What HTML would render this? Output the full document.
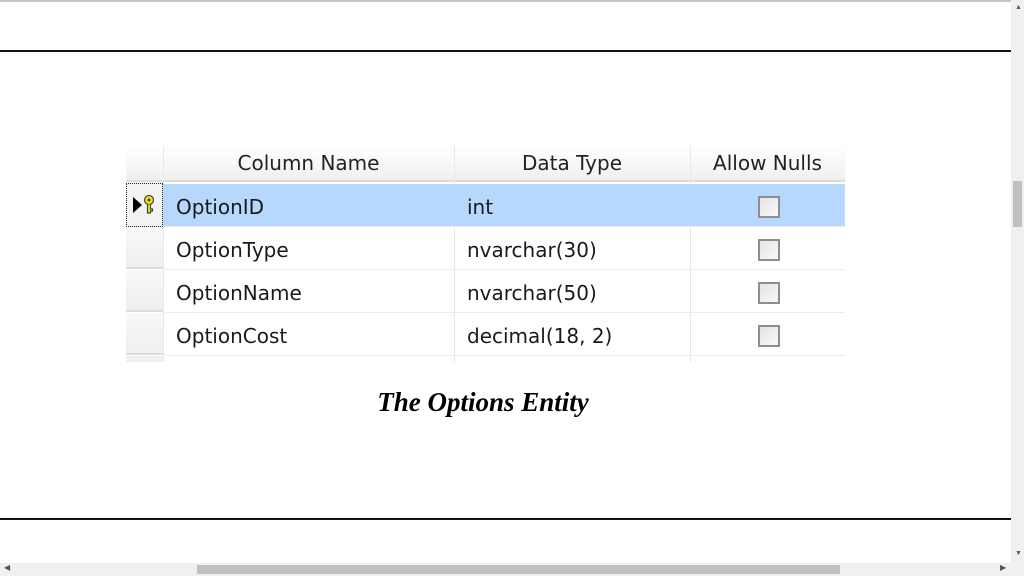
<!DOCTYPE html>
<html><head><style>
body{margin:0;width:1024px;height:576px;background:#fff;position:relative;overflow:hidden;font-family:"Liberation Sans",sans-serif}
.a{position:absolute}
.t{font-family:"DejaVu Sans","Liberation Sans",sans-serif;font-size:20px;color:#1a1a1a;line-height:43px;margin-top:2px}
.h{font-family:"DejaVu Sans","Liberation Sans",sans-serif;font-size:20px;color:#222;text-align:center;line-height:34px}
.cb{position:absolute;width:18px;height:18px;border:2px solid #8e8e8e;background:linear-gradient(135deg,#e4e4e4,#f8f8f8);left:758px}
.rs{position:absolute;left:126px;width:37px;height:40px;background:linear-gradient(#f8f8f8,#efefef);border-bottom:2px solid #ddd}
.rl{position:absolute;left:163px;width:682px;height:1px;background:#ececec}
</style></head><body>
<div class="a" style="left:0;top:0;width:1011px;height:2px;background:#c8c8c8"></div>
<div class="a" style="left:0;top:50px;width:1011px;height:2px;background:#111"></div>
<div class="a" style="left:0;top:518px;width:1011px;height:2px;background:#111"></div>
<div class="a" style="left:1011px;top:0;width:13px;height:576px;background:#f0f0f0"></div>
<div class="a" style="left:1013px;top:181px;width:9px;height:46px;background:#c0c0c0"></div>
<div class="a" style="left:1015px;top:4px;font-size:7px;color:#555">▲</div>
<div class="a" style="left:1015px;top:550px;font-size:7px;color:#555">▼</div>
<div class="a" style="left:0;top:563px;width:1011px;height:13px;background:#f0f0f0"></div>
<div class="a" style="left:197px;top:565px;width:643px;height:9px;background:#c0c0c0"></div>
<div class="a" style="left:4px;top:563px;font-size:8px;color:#555">◀</div>
<div class="a" style="left:1000px;top:563px;font-size:8px;color:#555">▶</div>
<div class="a" style="left:126px;top:146px;width:719px;height:34px;background:linear-gradient(#fff,#f0f0f0);border-bottom:2px solid #dcdcdc"></div>
<div class="a" style="left:163px;top:146px;width:1px;height:216px;background:#e8e8e8"></div>
<div class="a" style="left:454px;top:146px;width:1px;height:216px;background:#e8e8e8"></div>
<div class="a" style="left:690px;top:146px;width:1px;height:216px;background:#e8e8e8"></div>
<div class="a h" style="left:163px;top:146px;width:291px">Column Name</div>
<div class="a h" style="left:454px;top:146px;width:236px">Data Type</div>
<div class="a h" style="left:690px;top:146px;width:155px">Allow Nulls</div>
<div class="a" style="left:163px;top:184px;width:682px;height:42px;background:#b5d8fc"></div>
<div class="a" style="left:126px;top:183px;width:35px;height:42px;border:1px dotted #222;background:#f2f2f2"></div>
<div class="a" style="left:133px;top:197px;width:0;height:0;border-top:8px solid transparent;border-bottom:8px solid transparent;border-left:9px solid #000"></div>
<svg class="a" style="left:142px;top:195px" width="14" height="20" viewBox="0 0 14 20"><circle cx="7" cy="5" r="4.5" fill="#f2e21a" stroke="#444" stroke-width="1.2"/><circle cx="7" cy="5" r="1.5" fill="#444"/><path d="M5.5 9.5V18H8.5V16H10.5V14H8.5V9.5" fill="#f2e21a" stroke="#444" stroke-width="1.2"/></svg>
<div class="rs" style="top:227px"></div>
<div class="rs" style="top:270px"></div>
<div class="rs" style="top:313px"></div>
<div class="a" style="left:126px;top:356px;width:37px;height:6px;background:#f0f0f0"></div>
<div class="rl" style="top:226px"></div>
<div class="rl" style="top:269px"></div>
<div class="rl" style="top:312px"></div>
<div class="rl" style="top:355px"></div>
<div class="a t" style="left:176px;top:184px">OptionID</div>
<div class="a t" style="left:467px;top:184px">int</div>
<div class="a t" style="left:176px;top:227px">OptionType</div>
<div class="a t" style="left:467px;top:227px">nvarchar(30)</div>
<div class="a t" style="left:176px;top:270px">OptionName</div>
<div class="a t" style="left:467px;top:270px">nvarchar(50)</div>
<div class="a t" style="left:176px;top:313px">OptionCost</div>
<div class="a t" style="left:467px;top:313px">decimal(18, 2)</div>
<div class="cb" style="top:196px"></div>
<div class="cb" style="top:239px"></div>
<div class="cb" style="top:282px"></div>
<div class="cb" style="top:325px"></div>
<div class="a" style="left:0;width:966px;top:387px;text-align:center;font-family:'Liberation Serif',serif;font-style:italic;font-weight:bold;font-size:27px;color:#000">The Options Entity</div>
</body></html>
